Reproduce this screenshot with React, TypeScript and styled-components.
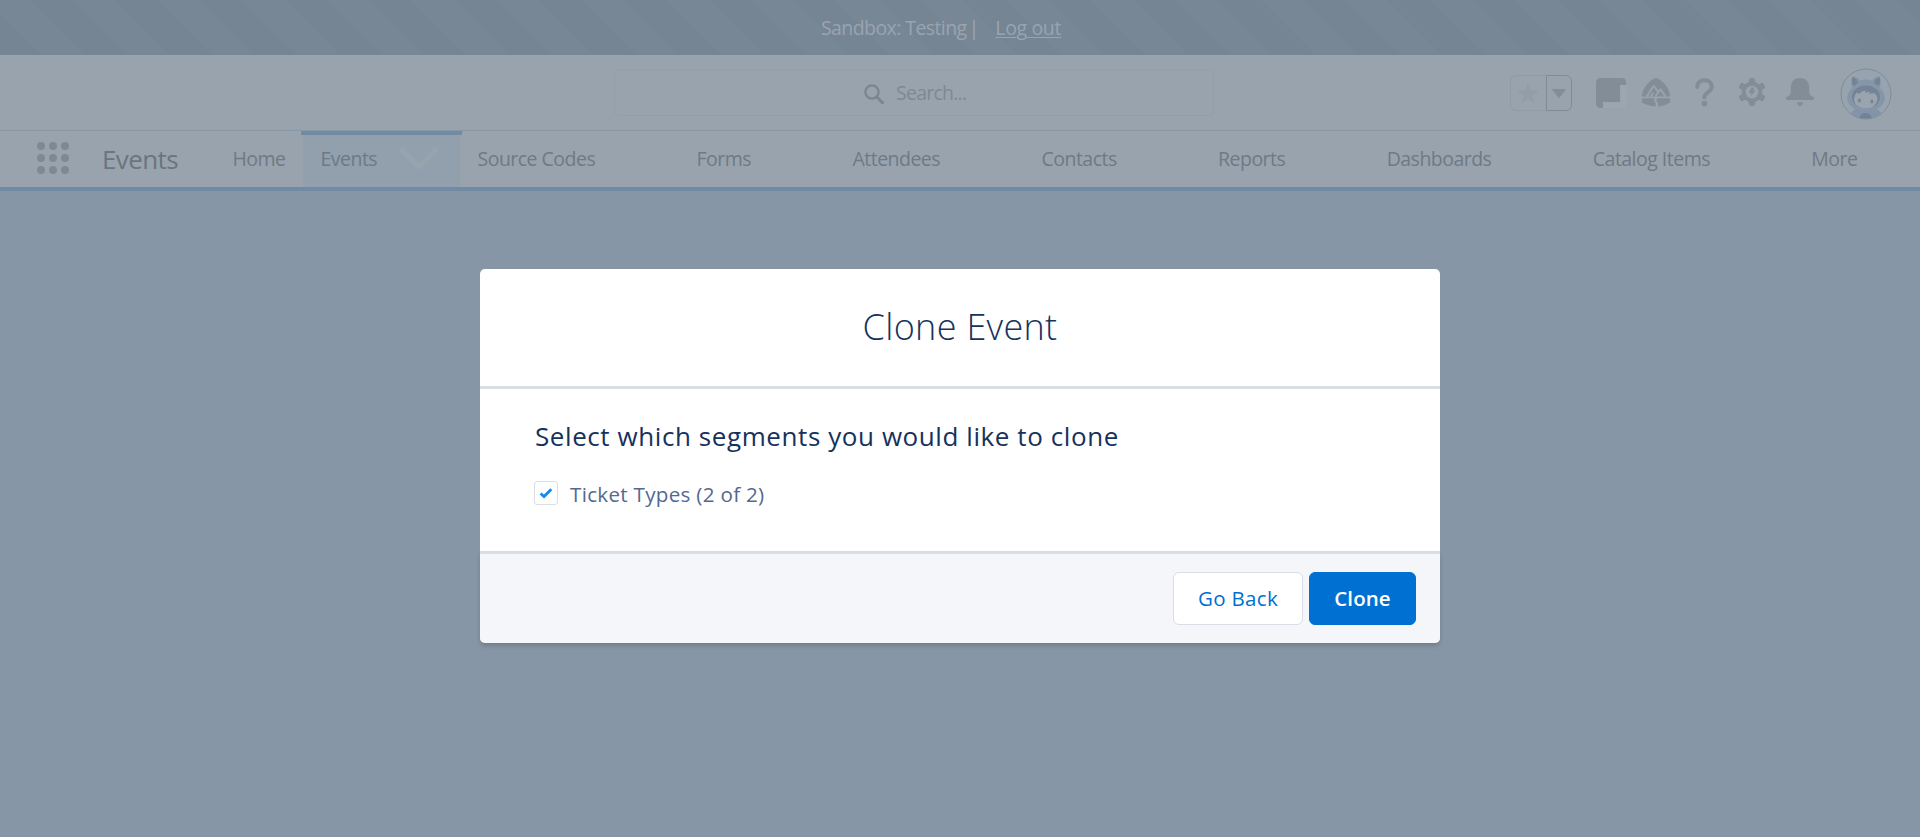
import React from "react";
import styled, { createGlobalStyle } from "styled-components";

const Global = createGlobalStyle`
  * { box-sizing: border-box; }
  html, body { margin: 0; height: 100%; overflow: hidden; }
  body { background: #8796a6; font-family: "Open Sans", "Noto Sans", sans-serif; }
  svg { display: block; flex: none; }
`;

const Page = styled.div`
  position: relative;
  height: 837px;
  width: 1920px;
`;

const SandboxBar = styled.div`
  display: flex;
  align-items: center;
  height: 55px;
  padding: 0 0 0 821px;
  color: #9aa4af;
  font-size: 19.5px;
  background: repeating-linear-gradient(45deg, #758594 0 30px, #778796 30px 60px);
`;

const SandboxName = styled.span`
  letter-spacing: -0.58px;
  white-space: pre;
`;

const Divider = styled.span`
  margin-left: 2px;
`;

const LogOut = styled.a`
  margin-left: 16px;
  letter-spacing: -0.35px;
  text-decoration: underline;
  text-decoration-thickness: 1px;
  text-underline-offset: 2px;
`;

const Header = styled.header`
  display: flex;
  align-items: flex-start;
  height: 76px;
  padding: 14px 0 0 614px;
  background: #99a3ad;
  border-bottom: 1px solid #8797a6;
`;

const SearchBox = styled.div`
  display: flex;
  align-items: center;
  width: 600px;
  height: 47px;
  padding: 2px 0 0 249px;
  border: 1px solid #909fa9;
  border-radius: 5px;
  color: #7d8a94;
  font-size: 19.5px;
`;

const SearchText = styled.span`
  margin-left: 12px;
  letter-spacing: -0.75px;
  padding-bottom: 2px;
`;

const Tools = styled.div`
  display: flex;
  align-items: flex-start;
  margin-left: 296px;
  padding-top: 6px;
  color: #828d97;
`;

const Favorites = styled.div`
  display: flex;
  width: 62px;
  height: 36px;
`;

const FavoriteButton = styled.div<{ $menu?: boolean }>`
  display: flex;
  align-items: center;
  justify-content: center;
  width: ${(p) => (p.$menu ? 26 : 36)}px;
  padding-right: ${(p) => (p.$menu ? 0 : 2)}px;
  border: 1px solid ${(p) => (p.$menu ? "#808b97" : "#909ba6")};
  border-right-width: ${(p) => (p.$menu ? 1 : 0)}px;
  border-radius: ${(p) => (p.$menu ? "0 6px 6px 0" : "6px 0 0 6px")};
  color: ${(p) => (p.$menu ? "#828d97" : "#929da8")};
`;

const ToolIcon = styled.div<{ $gap: number }>`
  margin: 3px 0 0 ${(p) => p.$gap}px;
`;

const Avatar = styled.div`
  margin: -7px 0 0 26px;
`;

const Nav = styled.nav`
  display: flex;
  height: 60px;
  padding-left: 37px;
  background: #99a3ad;
  border-bottom: 4px solid #718ba4;
  color: #6e7a85;
`;

const Launcher = styled.div`
  display: grid;
  grid-template-columns: repeat(3, 8px);
  grid-auto-rows: 8px;
  gap: 4px;
  margin-top: 11px;
`;

const Dot = styled.i`
  border-radius: 50%;
  background: #7e8993;
`;

const AppName = styled.div`
  width: 130.5px;
  margin-left: 33px;
  font-size: 26px;
  line-height: 36px;
  margin-top: 10px;
  letter-spacing: -0.6px;
  color: #697580;
`;

const NavLabel = styled.span`
  font-size: 19.5px;
  line-height: 28px;
  letter-spacing: -0.52px;
  margin-top: 14px;
  white-space: nowrap;
`;

const ActiveTab = styled.div`
  display: flex;
  width: 161px;
  margin-left: 15px;
  padding-left: 20px;
  border-top: 4px solid #718ba4;
  background: linear-gradient(#929fac, #929fac) 2px 0 / 157px 100% no-repeat;

  ${NavLabel} { margin-top: 10px; }
`;

const TabChevron = styled.svg`
  margin: 12px 0 0 22px;
`;

const NavItems = styled.div`
  display: flex;
  gap: 101.4px;
  margin-left: 16px;
`;

const Dialog = styled.section`
  position: absolute;
  left: 480px;
  top: 269px;
  display: flex;
  flex-direction: column;
  width: 960px;
  height: 374px;
  border-radius: 5px;
  background: #fff;
`;

const DialogHeader = styled.header`
  height: 120px;
  border-bottom: 3px solid #d8dde6;
  text-align: center;
`;

const DialogTitle = styled.h2`
  margin: 34px 0 0;
  font-size: 36px;
  line-height: 48px;
  font-weight: 300;
  letter-spacing: 0.3px;
  color: #16325c;
`;

const DialogBody = styled.div`
  flex: 1;
  padding: 29px 54px 0;
`;

const Prompt = styled.h3`
  margin: 0 0 0 1px;
  font-size: 26px;
  line-height: 36px;
  font-weight: 380;
  letter-spacing: 0.58px;
  color: #16325c;
`;

const Option = styled.label`
  display: flex;
  align-items: center;
  height: 24px;
  margin-top: 27px;
  font-size: 20.6px;
  letter-spacing: 0.3px;
  color: #54698d;
`;

const OptionText = styled.span`
  padding-top: 1px;
`;

const Checkbox = styled.span`
  display: flex;
  align-items: center;
  justify-content: center;
  width: 24px;
  height: 24px;
  margin-right: 12px;
  border: 1px solid #d8dde6;
  border-radius: 3px;
`;

const DialogFooter = styled.footer`
  display: flex;
  justify-content: flex-end;
  gap: 6px;
  height: 92px;
  padding: 18px 24px 0;
  border-top: 3px solid #d8dde6;
  border-radius: 0 0 5px 5px;
  background: #f4f6f9;
  box-shadow: 0 3px 4px rgba(0, 0, 0, 0.16);
`;

const Button = styled.button<{ $primary?: boolean }>`
  width: ${(p) => (p.$primary ? 107 : 130)}px;
  height: 53px;
  padding: 0 0 1px;
  border: 1px solid ${(p) => (p.$primary ? "#0070d2" : "#d8dde6")};
  border-radius: 6px;
  background: ${(p) => (p.$primary ? "#0070d2" : "#fff")};
  color: ${(p) => (p.$primary ? "#fff" : "#0070d2")};
  font-family: inherit;
  font-size: 20.5px;
  font-weight: ${(p) => (p.$primary ? 600 : 400)};
  letter-spacing: ${(p) => (p.$primary ? 0.1 : 0.35)}px;
`;

const tabs = ["Source Codes", "Forms", "Attendees", "Contacts", "Reports", "Dashboards", "Catalog Items", "More"];

const SearchIcon = () => (
  <svg width="20" height="20" viewBox="0 0 20 20" fill="none" stroke="#7a8691">
    <circle cx="8" cy="8" r="6.6" strokeWidth="2.4" />
    <path d="M12.6 12.8 18.4 18.6" strokeWidth="3" strokeLinecap="round" />
  </svg>
);

const StarIcon = () => (
  <svg width="22" height="23" viewBox="0 0 22 23" fill="currentColor">
    <path d="M11 .5 13.7 8.5H22L15.4 13.6 17.8 22 11 17 4.2 22 6.6 13.6 0 8.5H8.3Z" />
  </svg>
);

const CaretIcon = () => (
  <svg width="14" height="9" viewBox="0 0 14 9" fill="currentColor">
    <path d="M1 0H13Q14 .4 13.4 1.2L7.6 8.4Q7 9 6.4 8.4L.6 1.2Q0 .4 1 0Z" />
  </svg>
);

const GuideIcon = () => (
  <svg width="30" height="30" viewBox="0 0 30 30">
    <path d="M5 0H26Q30 0 30 4V7H24V24H7V30H5Q0 30 0 25V5Q0 0 5 0Z" fill="currentColor" />
    <path d="M7 24.5H24.5V7H30V27Q30 30 27 30H7Z" fill="#9ca6b0" />
  </svg>
);

const TrailheadIcon = () => (
  <svg width="28" height="29" viewBox="0 0 28 29">
    <path d="M14 0C17 .4 28 8 28 18.5H0C0 8 11 .4 14 0Z" fill="currentColor" />
    <path d="M0 20.2H12.5Q11 23.5 14 25.2 13 27 13.5 28.5C8 28 3 26.5 0 24.5ZM15.5 20.2H28V24.5Q23 28 16 28.8 17 25.5 14.5 23.5 14 22 15.5 20.2Z" fill="currentColor" />
    <path d="M4.8 18.5 11 8.8Q11.8 7.8 12.6 8.8L16 14M13.5 18.5 17.6 12.2Q18.5 11 19.4 12.2L23.3 18.5M8.8 18.5 11.2 14.8" fill="none" stroke="#99a3ad" strokeWidth="2" />
  </svg>
);

const HelpIcon = () => (
  <svg width="19" height="29" viewBox="0 0 19 29" fill="none" stroke="currentColor">
    <path d="M2.2 9C2.2 4.6 5.3 2.2 9.5 2.2S16.8 5 16.8 8.8C16.8 14.2 9.4 14 9.4 19.6" strokeWidth="4" strokeLinecap="round" />
    <rect x="8" y="24.2" width="2.8" height="2.8" strokeWidth="2.6" strokeLinejoin="round" />
  </svg>
);

const SetupIcon = () => (
  <svg width="26" height="28" viewBox="-13 -14 26 28">
    <g fill="currentColor">
      {[0, 60, 120, 180, 240, 300].map((a) => (
        <rect key={a} x="-3.2" y="-14" width="6.4" height="8" rx="2" transform={`rotate(${a})`} />
      ))}
      <circle r="10.4" />
    </g>
    <circle r="6.3" fill="#99a3ad" />
    <path d="M-.6-4.6H2.4L1-1.2H3.6L-2 5-.6.9H-3.2Z" fill="currentColor" />
  </svg>
);

const BellIcon = () => (
  <svg width="28" height="29" viewBox="0 0 28 29" fill="currentColor">
    <path d="M14 0C20 0 23.2 4.2 23.2 9.5V14Q23.2 17.5 26 18.2 28 18.8 28 20.5 28 22 26.4 22H1.6Q0 22 0 20.5 0 18.8 2 18.2 4.8 17.5 4.8 14V9.5C4.8 4.2 8 0 14 0ZM11.6 24.2H16.4Q17.6 24.2 17 25.6C15.8 28.8 12.2 28.8 11 25.6Q10.4 24.2 11.6 24.2Z" />
  </svg>
);

const AvatarPicture = () => (
  <svg width="52" height="52" viewBox="0 0 52 52">
    <clipPath id="avatar"><circle cx="26" cy="26" r="24.5" /></clipPath>
    <circle cx="26" cy="26" r="25" fill="#97a3af" stroke="#7f8d99" />
    <g clipPath="url(#avatar)">
      <path d="M8 52Q9 43 18 40H34Q43 43 44 52Z" fill="#8393a9" />
      <path d="M12 20Q10 10 13 8.2 17 8.5 20 12.5 26 10.4 32 12.5 35 8.5 39 8.2 42 10 40 20 45 25 45 31 42 43 26 43 10 43 7 31 7 25 12 20Z" fill="#8696a9" />
      <path d="M12.5 9Q17 10 18 15L13.2 18Q11 13 12.5 9ZM39.5 9Q35 10 34 15L38.8 18Q41 13 39.5 9Z" fill="#748496" />
      <ellipse cx="26" cy="29" rx="14" ry="11.5" fill="#748496" />
      <path d="M14 32Q14 27 17 24.5L19 26 22 23.5 26 22.5 25 25 30 23.5 29 26 34 25Q37.5 27 37.5 31 36 40.5 26 40.5 15.5 40.5 14 32Z" fill="#99a4af" />
      <ellipse cx="19.5" cy="32.5" rx="1.5" ry="2" fill="#748498" />
      <ellipse cx="31.8" cy="33.5" rx="1.5" ry="2" fill="#748498" />
      <ellipse cx="25.5" cy="50" rx="6" ry="5" fill="#718297" />
    </g>
  </svg>
);

export default function App() {
  return (
    <Page>
      <Global />
      <SandboxBar>
        <SandboxName>Sandbox: Testing</SandboxName>
        <Divider>|</Divider>
        <LogOut>Log out</LogOut>
      </SandboxBar>
      <Header>
        <SearchBox>
          <SearchIcon />
          <SearchText>Search...</SearchText>
        </SearchBox>
        <Tools>
          <Favorites>
            <FavoriteButton><StarIcon /></FavoriteButton>
            <FavoriteButton $menu><CaretIcon /></FavoriteButton>
          </Favorites>
          <ToolIcon $gap={24}><GuideIcon /></ToolIcon>
          <ToolIcon $gap={16}><TrailheadIcon /></ToolIcon>
          <ToolIcon $gap={25}><HelpIcon /></ToolIcon>
          <ToolIcon $gap={25}><SetupIcon /></ToolIcon>
          <ToolIcon $gap={21}><BellIcon /></ToolIcon>
          <Avatar><AvatarPicture /></Avatar>
        </Tools>
      </Header>
      <Nav>
        <Launcher>{Array.from({ length: 9 }, (_, i) => <Dot key={i} />)}</Launcher>
        <AppName>Events</AppName>
        <NavLabel>Home</NavLabel>
        <ActiveTab>
          <NavLabel>Events</NavLabel>
          <TabChevron width="40" height="25" viewBox="0 0 40 25" fill="none">
            <path d="M3 3 20 20 37 3" stroke="#98a3ae" strokeWidth="5" strokeLinecap="round" strokeLinejoin="round" />
          </TabChevron>
        </ActiveTab>
        <NavItems>{tabs.map((t) => <NavLabel key={t}>{t}</NavLabel>)}</NavItems>
      </Nav>
      <Dialog>
        <DialogHeader><DialogTitle>Clone Event</DialogTitle></DialogHeader>
        <DialogBody>
          <Prompt>Select which segments you would like to clone</Prompt>
          <Option>
            <Checkbox>
              <svg width="14" height="12" viewBox="0 0 14 12">
                <path d="M1.6 6.5 5 9.6 12.3 2.2" fill="none" stroke="#1589ee" strokeWidth="2.8" />
              </svg>
            </Checkbox>
            <OptionText>Ticket Types (2 of 2)</OptionText>
          </Option>
        </DialogBody>
        <DialogFooter>
          <Button>Go Back</Button>
          <Button $primary>Clone</Button>
        </DialogFooter>
      </Dialog>
    </Page>
  );
}
